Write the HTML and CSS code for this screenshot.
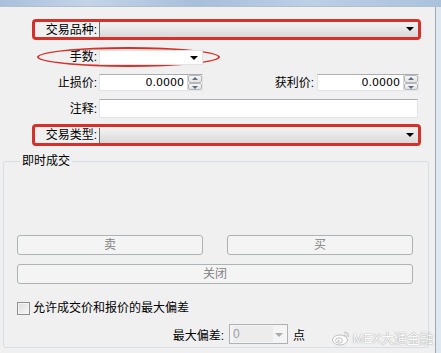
FILE: index.html
```html
<!DOCTYPE html>
<html lang="zh-CN">
<head>
  <meta charset="UTF-8">
  <title>下单</title>
  <link rel="stylesheet" href="styles.css">
</head>
<body>
  <div class="frame-top"></div>
  <div class="dlg">
    <div class="mark-box">
      <span class="lbl lbl-in">交易品种:</span>
      <div class="combo combo-grad"><span class="arrow"></span></div>
    </div>

    <div class="row row-lots">
      <div class="mark-oval">
        <span class="lbl lbl-oval">手数:</span>
        <div class="combo combo-white"><span class="arrow"></span></div>
      </div>
    </div>

    <div class="row row-price">
      <span class="lbl lbl-main">止损价:</span>
      <div class="spin">
        <span class="spin-val">0.0000</span>
        <span class="spin-btns"><i class="up"></i><i class="down"></i></span>
      </div>
      <span class="lbl lbl-tp">获利价:</span>
      <div class="spin spin-tp">
        <span class="spin-val">0.0000</span>
        <span class="spin-btns"><i class="up"></i><i class="down"></i></span>
      </div>
    </div>

    <div class="row row-note">
      <span class="lbl lbl-main">注释:</span>
      <div class="text-field"></div>
    </div>

    <div class="mark-box mark-type">
      <span class="lbl lbl-in">交易类型:</span>
      <div class="combo combo-grad"><span class="arrow"></span></div>
    </div>

    <div class="group">
      <span class="group-title">即时成交</span>
      <div class="btn-row">
        <div class="btn btn-half">卖</div>
        <div class="btn btn-half">买</div>
      </div>
      <div class="btn btn-full">关闭</div>
      <div class="check-row">
        <span class="check"></span>
        <span>允许成交价和报价的最大偏差</span>
      </div>
      <div class="dev-row">
        <span class="dev-lbl">最大偏差:</span>
        <div class="combo-off">
          <span class="off-val">0</span>
          <span class="off-arrow"></span>
        </div>
        <span class="dev-unit">点</span>
      </div>
    </div>

    <div class="watermark">
      <svg width="18" height="16" viewBox="0 0 18 16">
        <ellipse cx="8" cy="10" rx="7.5" ry="5" fill="#fff" stroke="#b9b9b9" stroke-width="1"/>
        <ellipse cx="7" cy="10.5" rx="3.4" ry="2.6" fill="none" stroke="#b9b9b9" stroke-width="1"/>
        <circle cx="6.6" cy="10.8" r="1" fill="#b9b9b9"/>
        <path d="M12 2.5 a4 4 0 0 1 4.5 4.5" fill="none" stroke="#b9b9b9" stroke-width="1.2"/>
        <path d="M12 5 a1.8 1.8 0 0 1 2.2 2.2" fill="none" stroke="#b9b9b9" stroke-width="1"/>
      </svg>
      <span>MEX大通金融</span>
    </div>
  </div>
</body>
</html>
```

FILE: styles.css
```css
body {
  margin: 0;
  background: #dfe7f0;
  font-family: "Liberation Sans", "Noto Sans CJK SC", sans-serif;
  font-size: 12px;
  color: #000;
}
.frame-top {
  width: 441px;
  height: 6px;
  background: linear-gradient(90deg, #a9c0db 0%, #c3d4e8 20%, #a8bfda 45%, #bcd0e6 70%, #abc2dc 100%);
  border-bottom: 1px solid #b4bfcc;
}
.dlg {
  position: relative;
  width: 436px;
  height: 346px;
  box-sizing: border-box;
  padding-top: 12px;
  background: #f0f0f0;
  border-right: 1px solid #9ea8b3;
}
.lbl {
  text-align: right;
  line-height: 16px;
  white-space: nowrap;
}

/* red annotation boxes */
.mark-box {
  margin-left: 32px;
  width: 389px;
  height: 21px;
  box-sizing: border-box;
  border: 3px solid #d7302b;
  border-radius: 4px;
  display: flex;
  align-items: center;
}
.mark-type {
  margin-top: 6px;
  height: 22px;
}
.lbl-in { width: 62px; }
.mark-oval {
  margin-left: 37px;
  width: 183px;
  height: 20px;
  box-sizing: border-box;
  border: 2px solid #d7302b;
  border-radius: 50%;
  display: flex;
  align-items: center;
}
.lbl-oval { width: 58px; }

/* combos */
.combo {
  position: relative;
  height: 15px;
  box-sizing: border-box;
  margin-left: 2px;
}
.mark-box .combo {
  flex: 1;
  border-left: 1px solid #707070;
}
.combo-grad {
  background: linear-gradient(#f3f3f3, #e6e6e6 50%, #d9d9d9);
}
.combo-white {
  width: 104px;
  background: #fff;
  border: 1px solid #e3e3e3;
}
.arrow {
  position: absolute;
  right: 4px;
  top: 5px;
  border-left: 4px solid transparent;
  border-right: 4px solid transparent;
  border-top: 4px solid #000;
}

/* rows */
.row {
  display: flex;
  align-items: center;
}
.row-lots { margin-top: 7px; }
.row-price { margin-top: 7px; height: 17px; }
.row-note { margin-top: 8px; }
.lbl-main { width: 97px; margin-right: 2px; }
.lbl-tp { width: 111px; margin-right: 3px; }

.spin {
  width: 104px;
  height: 17px;
  box-sizing: border-box;
  background: #fff;
  border: 1px solid #e2e3ea;
  border-top-color: #abadb3;
  display: flex;
  align-items: center;
  justify-content: flex-end;
}
.spin-tp { width: 102px; }
.spin-val {
  font-family: "DejaVu Sans", sans-serif;
  font-size: 11px;
  margin-right: 3px;
}
.spin-btns {
  width: 14px;
  height: 15px;
  display: flex;
  flex-direction: column;
  border-left: 1px solid #d4d4d4;
}
.spin-btns i {
  flex: 1;
  position: relative;
  background: linear-gradient(#f6f6f6, #e1e1e1);
  border: 1px solid #b7b7b7;
  border-radius: 2px;
}
.spin-btns i::after {
  content: "";
  position: absolute;
  left: 3px;
  border-left: 3px solid transparent;
  border-right: 3px solid transparent;
}
.spin-btns .up::after { top: 1px; border-bottom: 3px solid #5b6e86; }
.spin-btns .down::after { top: 2px; border-top: 3px solid #5b6e86; }

.text-field {
  width: 319px;
  height: 19px;
  box-sizing: border-box;
  background: #fff;
  border: 1px solid #e2e3ea;
  border-top-color: #abadb3;
}

/* group box */
.group {
  margin: 15px 0 0 3px;
  width: 426px;
  height: 187px;
  box-sizing: border-box;
  border: 1px solid #d5dfe5;
  border-radius: 3px;
  padding-left: 13px;
}
.group-title {
  display: inline-block;
  margin: -9px 0 0 3px;
  padding: 0 2px;
  line-height: 16px;
  background: #f0f0f0;
  vertical-align: top;
}
.btn-row {
  display: flex;
  gap: 24px;
  margin-top: 59px;
}
.btn {
  height: 20px;
  box-sizing: border-box;
  border: 1px solid #adb2b5;
  border-radius: 3px;
  background: #f4f4f4;
  color: #838383;
  line-height: 18px;
  text-align: center;
}
.btn-half { width: 186px; }
.btn-full { width: 396px; margin-top: 9px; }

.check-row {
  display: flex;
  align-items: center;
  gap: 3px;
  margin-top: 16px;
  line-height: 16px;
}
.check {
  width: 13px;
  height: 13px;
  box-sizing: border-box;
  border: 1px solid #8f8f8f;
  background: linear-gradient(135deg, #dcdcdc, #f8f8f8);
  box-shadow: inset 0 0 0 1px #f4f4f4;
}

.dev-row {
  display: flex;
  align-items: center;
  margin-top: 8px;
  height: 20px;
}
.dev-lbl {
  width: 207px;
  text-align: right;
  margin-right: 5px;
}
.combo-off {
  width: 59px;
  height: 20px;
  box-sizing: border-box;
  border: 1px solid #adb2b5;
  background: #f4f4f4;
  display: flex;
  align-items: center;
  position: relative;
}
.off-val {
  color: #a0a0a0;
  margin-left: 3px;
  flex: 1;
  background: #ececec;
  margin-right: 14px;
  line-height: 16px;
}
.off-arrow {
  position: absolute;
  right: 4px;
  top: 8px;
  border-left: 4px solid transparent;
  border-right: 4px solid transparent;
  border-top: 4px solid #a9a9a9;
}
.dev-unit { margin-left: 5px; }

/* watermark lying over the dialog */
.watermark {
  position: absolute;
  right: 2px;
  bottom: 6px;
  display: flex;
  align-items: center;
  gap: 3px;
  color: #fff;
  font-size: 13px;
  text-shadow: 0 0 1px #9a9a9a, 0 0 1px #9a9a9a;
  opacity: 0.85;
}
```
